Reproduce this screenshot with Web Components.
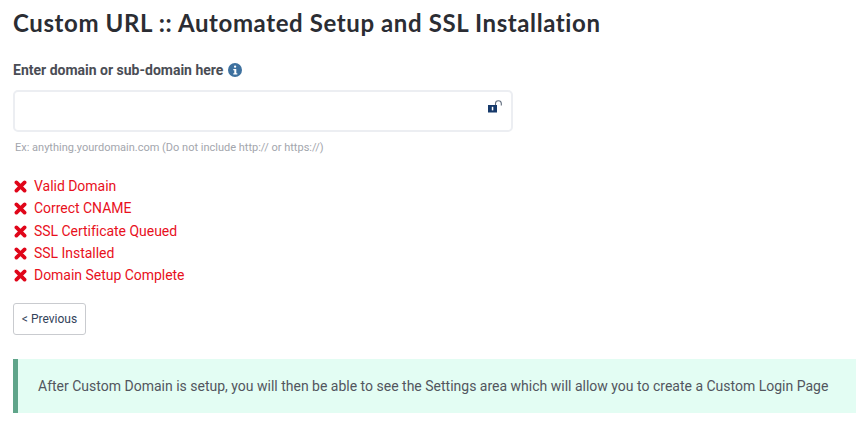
<!DOCTYPE html>
<html>
<head>
<meta charset="utf-8">
<style>
  html, body { margin: 0; background: #fff; }
  body { font-family: Roboto, sans-serif; }
</style>
</head>
<body>
<setup-page>
  <domain-field></domain-field>
  <check-list>
    <check-item>Valid Domain</check-item>
    <check-item>Correct CNAME</check-item>
    <check-item>SSL Certificate Queued</check-item>
    <check-item>SSL Installed</check-item>
    <check-item>Domain Setup Complete</check-item>
  </check-list>
  <prev-button>&lt; Previous</prev-button>
  <info-alert>After Custom Domain is setup, you will then be able to see the Settings area which will allow you to create a Custom Login Page</info-alert>
</setup-page>

<script>
class SetupPage extends HTMLElement {
  constructor() {
    super();
    this.attachShadow({ mode: "open" });
    this.shadowRoot.innerHTML = `
    <style>
      :host { display: block; height: 427px; padding: 8px 0 0 13px; box-sizing: border-box; overflow: hidden; }
      h1 {
        margin: 0 0 22px;
        font: 700 24px/30px Lato, "Noto Sans", sans-serif;
        color: #2b2d33;
        letter-spacing: 0.6px;
      }
    </style>
    <h1>Custom URL :: Automated Setup and SSL Installation</h1>
    <slot></slot>`;
  }
}

class DomainField extends HTMLElement {
  constructor() {
    super();
    this.attachShadow({ mode: "open" });
    this.shadowRoot.innerHTML = `
    <style>
      :host { display: block; width: 500px; }
      .label {
        display: flex; align-items: center; gap: 5px;
        font: 700 14px/20px Roboto, sans-serif; color: #4a4d55;
        margin-bottom: 10px; width: 400px;
      }
      .box {
        display: flex; justify-content: flex-end; align-items: flex-start;
        height: 42px; box-sizing: border-box;
        border: 2px solid #eceef2; border-radius: 5px;
        padding: 8px 9px 0 0;
      }
      .hint {
        margin: 9px 0 0 2px;
        font: 11px/14px Roboto, sans-serif; color: #a3a6ad;
      }
      svg { display: block; }
    </style>
    <div class="label">Enter domain or sub-domain here
      <svg width="14" height="14" viewBox="0 0 14 14">
        <circle cx="7" cy="7" r="7" fill="#3e719f"/>
        <rect x="6" y="2.6" width="2.2" height="2.2" rx="1" fill="#fff"/>
        <path d="M5.3 6h3v4.2h1v1.2H5.3v-1.2h1V7.2h-1z" fill="#fff"/>
      </svg>
    </div>
    <div class="box">
      <svg width="15" height="15" viewBox="0 0 15 15">
        <path d="M8.5 6V3.6a2.9 2.9 0 0 1 5.8 0V5.5" fill="none" stroke="#5f6b7c" stroke-width="1.1"/>
        <rect x="1" y="5" width="9" height="7.5" fill="#173a6b"/>
        <rect x="4.8" y="6.8" width="1.5" height="3.6" fill="#fff"/>
      </svg>
    </div>
    <div class="hint">Ex: anything.yourdomain.com (Do not include http:// or https://)</div>`;
  }
}

class CheckList extends HTMLElement {
  constructor() {
    super();
    this.attachShadow({ mode: "open" });
    this.shadowRoot.innerHTML = `
    <style>
      :host { display: flex; flex-direction: column; gap: 0; margin-top: 20px; }
    </style>
    <slot></slot>`;
  }
}

class CheckItem extends HTMLElement {
  constructor() {
    super();
    this.attachShadow({ mode: "open" });
    this.shadowRoot.innerHTML = `
    <style>
      :host {
        display: flex; align-items: center; gap: 7px; height: 22.3px;
        font: 14px/20px Roboto, sans-serif; color: #e8101c; letter-spacing: -0.03px;
      }
      svg { display: block; flex: none; margin: 1px 0 0 1px; }
    </style>
    <svg width="13" height="13" viewBox="0 0 13 13">
      <path d="M2.4 2.4 10.6 10.6M10.6 2.4 2.4 10.6" fill="none" stroke="#e0061a" stroke-width="3.7" stroke-linecap="round"/>
    </svg>
    <span><slot></slot></span>`;
  }
}

class PrevButton extends HTMLElement {
  constructor() {
    super();
    this.attachShadow({ mode: "open" });
    this.shadowRoot.innerHTML = `
    <style>
      :host {
        display: flex; align-items: center; justify-content: center;
        width: 73px; height: 32px; box-sizing: border-box; margin-top: 17px;
        border: 1px solid #c9cbcf; border-radius: 3px;
        font: 12px/16px Roboto, sans-serif; color: #33435a;
      }
    </style>
    <slot></slot>`;
  }
}

class InfoAlert extends HTMLElement {
  constructor() {
    super();
    this.attachShadow({ mode: "open" });
    this.shadowRoot.innerHTML = `
    <style>
      :host {
        display: flex; align-items: center;
        height: 54px; box-sizing: border-box; margin-top: 24px;
        padding-left: 20px;
        background: #e3fdf3; border-left: 5px solid #5fa58a;
        font: 14px/20px Roboto, sans-serif; color: #52565e;
        white-space: nowrap;
      }
    </style>
    <slot></slot>`;
  }
}

customElements.define("setup-page", SetupPage);
customElements.define("domain-field", DomainField);
customElements.define("check-list", CheckList);
customElements.define("check-item", CheckItem);
customElements.define("prev-button", PrevButton);
customElements.define("info-alert", InfoAlert);
</script>
</body>
</html>
